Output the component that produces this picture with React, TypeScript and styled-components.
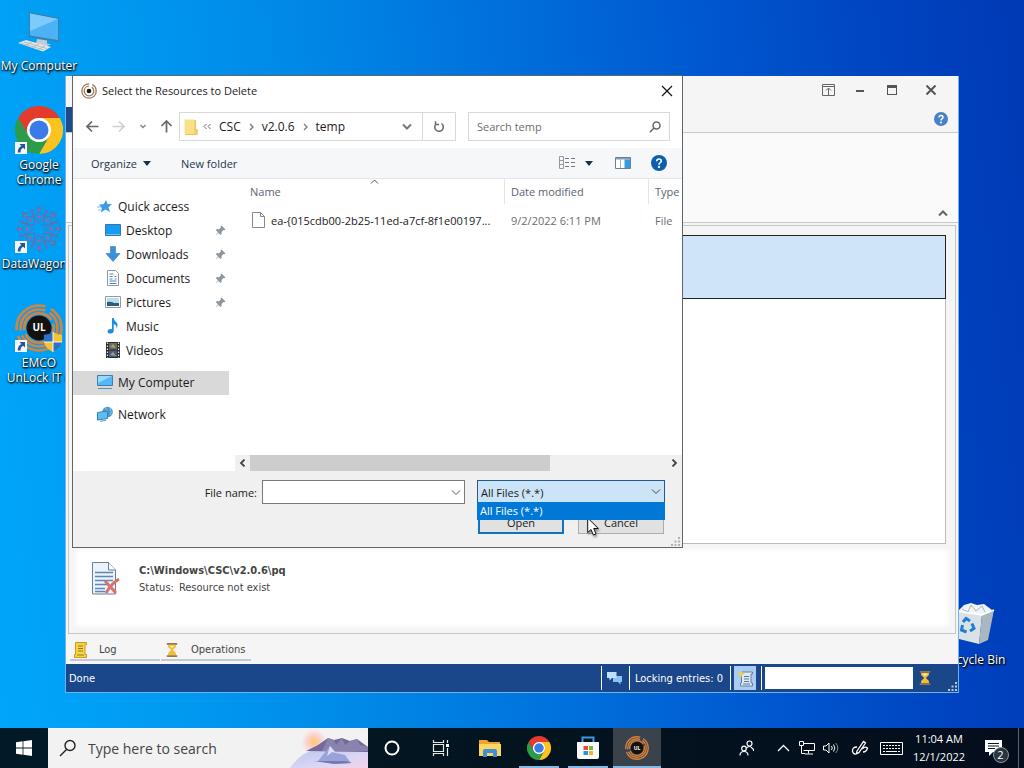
import { useState } from 'react';
import styled, { createGlobalStyle, css } from 'styled-components';

const uiFont = '"Open Sans", "Noto Sans", sans-serif';
const appFont = '"DejaVu Sans Condensed", "DejaVu Sans", sans-serif';

const places = [
  { name: 'Desktop', icon: <DesktopIcon />, pinned: true },
  { name: 'Downloads', icon: <DownloadsIcon />, pinned: true },
  { name: 'Documents', icon: <DocumentsIcon />, pinned: true },
  { name: 'Pictures', icon: <PicturesIcon />, pinned: true },
  { name: 'Music', icon: <MusicIcon />, pinned: false },
  { name: 'Videos', icon: <VideosIcon />, pinned: false },
];

const shortcuts = [
  { name: 'My Computer', icon: <ComputerLargeIcon />, link: false },
  { name: 'Google Chrome', icon: <ChromeIcon size={48} />, link: true },
  { name: 'DataWagon…', icon: <DataWagonIcon />, link: true },
  { name: 'EMCO UnLock\u00a0IT\u00a06', icon: <EmcoIcon />, link: true },
];

function App() {
  return (
    <StScreen>
      <GlobalStyle />
      <StDesktop>
        <StShortcutList>
          {shortcuts.map((item) => (
            <StShortcut key={item.name}>
              <StShortcutIcon>
                {item.icon}
                {item.link && <StLinkBadge><LinkArrowIcon /></StLinkBadge>}
              </StShortcutIcon>
              <StShortcutName>{item.name}</StShortcutName>
            </StShortcut>
          ))}
        </StShortcutList>
        <StRecycleBin>
          <StShortcutIcon><RecycleIcon /></StShortcutIcon>
          <StShortcutName>Recycle Bin</StShortcutName>
        </StRecycleBin>
        <MainWindow />
        <FileDialog />
        <StCursor><CursorIcon /></StCursor>
      </StDesktop>
      <Taskbar />
    </StScreen>
  );
}

export default App;

function MainWindow() {
  return (
    <StWindow>
      <StWindowHead>
        <StWindowButtons>
          <StWindowButton aria-label="Ribbon options">
            <svg width="13" height="12" fill="none" stroke="#666">
              <path d="M.5.5h12v11H.5zM.5 2.5h12M6.5 11V4.500M4 6.500l2.500-2.500 2.500 2.500" />
            </svg>
          </StWindowButton>
          <StWindowButton aria-label="Minimize">
            <svg width="8" height="12"><path d="M0 6h8v2H0z" fill="#555" /></svg>
          </StWindowButton>
          <StWindowButton aria-label="Maximize">
            <svg width="10" height="10"><path d="M0 0h10v10H0zM1 3v6h8V3z" fill="#555" fillRule="evenodd" /></svg>
          </StWindowButton>
          <StWindowButton $wide aria-label="Close">
            <svg width="10" height="10" stroke="#555" strokeWidth="2"><path d="M.5.5l9 9M9.500.5l-9 9" /></svg>
          </StWindowButton>
        </StWindowButtons>
        <StRibbonTabs>
          <StFileTab aria-label="File" />
          <StRibbonHelp aria-label="Help"><HelpIcon size={14} color="#4a80c8" /></StRibbonHelp>
        </StRibbonTabs>
      </StWindowHead>
      <StRibbon>
        <StPlainButton aria-label="Collapse ribbon">
          <svg width="10" height="8" fill="none" stroke="#666" strokeWidth="2"><path d="M1 6.500l4-4 4 4" /></svg>
        </StPlainButton>
      </StRibbon>
      <StWorkspace>
        <StResourceList>
          <StSelectedResource />
        </StResourceList>
        <StDetails>
          <MissingFileIcon />
          <div>
            <StDetailsPath>C:\Windows\CSC\v2.0.6\pq</StDetailsPath>
            <StDetailsStatus><span>Status:</span> <span>Resource not exist</span></StDetailsStatus>
          </div>
        </StDetails>
      </StWorkspace>
      <StPanelTabs>
        <StPanelTab><LogIcon /><span>Log</span></StPanelTab>
        <StPanelTab><HourglassIcon size={14} /><span>Operations</span></StPanelTab>
      </StPanelTabs>
      <StStatusBar>
        <StStatusText>Done</StStatusText>
        <StStatusCell><ChatIcon /></StStatusCell>
        <StStatusCell>Locking entries: 0</StStatusCell>
        <StStatusCell $tight>
          <StStatusToggle aria-label="Show log"><ScrollIcon /></StStatusToggle>
        </StStatusCell>
        <StStatusCell $tight>
          <StProgress />
          <HourglassIcon size={14} />
        </StStatusCell>
        <StAppGrip><GripIcon color="#b9cbe4" /></StAppGrip>
      </StStatusBar>
    </StWindow>
  );
}

function FileDialog() {
  const [fileName, setFileName] = useState('');
  const [search, setSearch] = useState('');

  return (
    <StDialog role="dialog" aria-labelledby="dialog-title">
      <StDialogTitleBar>
        <RingsIcon />
        <StDialogTitle id="dialog-title">Select the Resources to Delete</StDialogTitle>
        <StPlainButton aria-label="Close">
          <svg width="12" height="12" stroke="#111" strokeWidth="1.200"><path d="M1 1l10 10M11 1L1 11" /></svg>
        </StPlainButton>
      </StDialogTitleBar>

      <StNavBar>
        <StNavButtons>
          <StPlainButton aria-label="Back"><ArrowIcon color="#666" /></StPlainButton>
          <StPlainButton aria-label="Forward"><ArrowIcon color="#d0d0d0" rotate={180} /></StPlainButton>
          <StPlainButton aria-label="Recent locations">
            <svg width="8" height="6" fill="none" stroke="#888" strokeWidth="1.500"><path d="M1.500 1l2.500 2.500L6.500 1" /></svg>
          </StPlainButton>
          <StPlainButton aria-label="Up"><ArrowIcon color="#666" rotate={90} /></StPlainButton>
        </StNavButtons>
        <StAddress>
          <FolderIcon />
          <StCrumbs>
            <svg width="8" height="8" fill="none" stroke="#666"><path d="M3.500 1L1 3.500 3.500 6M7.500 1L5 3.500 7.500 6" /></svg>
            <StCrumb>CSC</StCrumb>
            <CrumbArrow />
            <StCrumb>v2.0.6</StCrumb>
            <CrumbArrow />
            <StCrumb>temp</StCrumb>
          </StCrumbs>
          <StPlainButton aria-label="Previous locations"><ChevronDown color="#777" width={2} /></StPlainButton>
          <StRefresh aria-label="Refresh">
            <svg width="12" height="13" fill="none" stroke="#666" strokeWidth="1.500">
              <path d="M8.500 3.500a4.300 4.300 0 1 1-5.500.5M2.500 1.200v3.300h3.500" />
            </svg>
          </StRefresh>
        </StAddress>
        <StSearch>
          <input
            aria-label="Search temp"
            placeholder="Search temp"
            value={search}
            onChange={(e) => setSearch(e.target.value)}
          />
          <svg width="12" height="12" fill="none" stroke="#666" strokeWidth="1.500">
            <circle cx="7.500" cy="4.500" r="3.500" /><path d="M5 7L.8 11.200" />
          </svg>
        </StSearch>
      </StNavBar>

      <StToolbar>
        <StToolButton>Organize <Triangle /></StToolButton>
        <StToolButton>New folder</StToolButton>
        <StToolbarRight>
          <StToolButton aria-label="Change view">
            <svg width="17" height="14" fill="none" stroke="#778">
              <path d="M.5.5h4v12h-4zM.5 4.500h4M.5 8.500h4" stroke="#999" />
              <path d="M6 2.500h4M12 2.500h4M6 6.500h4M12 6.500h4M6 10.500h4M12 10.500h4" />
            </svg>
            <StViewArrow><Triangle /></StViewArrow>
          </StToolButton>
          <StPlainButton aria-label="Preview pane">
            <svg width="16" height="12"><path d="M.5.5h15v11H.5z" fill="#fff" stroke="#6b7f90" /><path d="M1 1h14v1.500H1z" fill="#8aa0b2" /><path d="M9.500 2.500H15V11H9.500z" fill="#3a9ae0" /><path d="M5.500 2v9" stroke="#9fb6c8" /></svg>
          </StPlainButton>
          <StPlainButton aria-label="Help"><HelpIcon size={16} color="#0d5fae" /></StPlainButton>
        </StToolbarRight>
      </StToolbar>

      <StDialogBody>
        <StSidebar>
          <StPlace href="#quick"><StarIcon />Quick access</StPlace>
          {places.map((place) => (
            <StPlace key={place.name} href={`#${place.name}`} $nested>
              {place.icon}
              {place.name}
              {place.pinned && <StPin><PinIcon /></StPin>}
            </StPlace>
          ))}
          <StPlace href="#computer" $selected $spaced><ComputerIcon />My Computer</StPlace>
          <StPlace href="#network" $spaced><NetworkIcon />Network</StPlace>
        </StSidebar>
        <StFiles>
          <StFileTable>
            <colgroup>
              <StCol $w={269} />
              <StCol $w={144} />
              <col />
            </colgroup>
            <thead>
              <tr>
                <th>
                  Name
                  <StSortMark>
                    <svg width="9" height="5" fill="none" stroke="#555"><path d="M1 4.500l3.500-3.500L8 4.500" /></svg>
                  </StSortMark>
                </th>
                <th>Date modified</th>
                <th>Type</th>
              </tr>
            </thead>
            <tbody>
              <tr>
                <td>
                  <StFileName>
                    <svg width="13" height="16" fill="#fff" stroke="#888"><path d="M.5.5h8l4 4v11H.5zM8.500.5v4h4" /></svg>
                    <span>ea-{'{'}015cdb00-2b25-11ed-a7cf-8f1e00197...</span>
                  </StFileName>
                </td>
                <td>9/2/2022 6:11 PM</td>
                <td>File</td>
              </tr>
            </tbody>
          </StFileTable>
          <StScrollBar>
            <StPlainButton aria-label="Scroll left"><ScrollArrow /></StPlainButton>
            <StScrollTrack><StScrollThumb /></StScrollTrack>
            <StPlainButton aria-label="Scroll right"><ScrollArrow flip /></StPlainButton>
          </StScrollBar>
        </StFiles>
      </StDialogBody>

      <StDialogFooter>
        <StFileNameLabel htmlFor="file-name">File name:</StFileNameLabel>
        <StFileNameBox>
          <input id="file-name" value={fileName} onChange={(e) => setFileName(e.target.value)} />
          <StPlainButton aria-label="File name history"><ChevronDown color="#555" width={1} /></StPlainButton>
        </StFileNameBox>
        <StFilter>
          <StFilterSelect aria-label="File type">
            <option>All Files (*.*)</option>
          </StFilterSelect>
          <StFilterArrow><ChevronDown color="#444" width={1} /></StFilterArrow>
          <StFilterMenu role="listbox">
            <li role="option" aria-selected="true">All Files (*.*)</li>
          </StFilterMenu>
        </StFilter>
        <StDialogButtons>
          <StDialogButton $primary>Open</StDialogButton>
          <StDialogButton>Cancel</StDialogButton>
        </StDialogButtons>
        <StDialogGrip><GripIcon color="#b0b0b0" /></StDialogGrip>
      </StDialogFooter>
    </StDialog>
  );
}

function Taskbar() {
  return (
    <StTaskbar>
      <StTask aria-label="Start">
        <svg width="16" height="16" fill="#fff"><path d="M0 2.200L6.600 1.300V7.600H0zM7.400 1.200L16 0V7.600H7.400zM0 8.400H6.600V14.700L0 13.800zM7.400 8.400H16V16L7.400 14.800z" /></svg>
      </StTask>
      <StTaskSearch>
        <svg width="18" height="18" fill="none" stroke="#222" strokeWidth="1.400"><circle cx="11" cy="6.500" r="5" /><path d="M7.500 10.500L1 17" /></svg>
        <input aria-label="Type here to search" placeholder="Type here to search" />
        <SearchArt />
      </StTaskSearch>
      <StTaskList>
        <StTask aria-label="Cortana">
          <svg width="16" height="16" fill="none" stroke="#fff" strokeWidth="2"><circle cx="8" cy="8" r="6.500" /></svg>
        </StTask>
        <StTask aria-label="Task view">
          <svg width="18" height="16" fill="none" stroke="#e8e8e8" strokeWidth="1.200">
            <path d="M1.500 4.500h10v7h-10zM1.500 0v2.500h10V0M1.500 16v-2.500h10V16M15.500 0v3M15.500 8v8" />
            <path d="M14 4h3v3h-3z" fill="#fff" stroke="none" />
          </svg>
        </StTask>
        <StTask aria-label="File Explorer">
          <svg width="22" height="18"><path d="M0 1h8l2 2h11v14H0z" fill="#e8a72c" /><path d="M0 5h22v12H0z" fill="#fcd462" /><path d="M4 18v-6q0-2 2-2h10q2 0 2 2v6h-4v-4H8v4z" fill="#3d8fd6" /></svg>
        </StTask>
        <StTask $open aria-label="Google Chrome"><ChromeIcon size={24} /></StTask>
        <StTask $open aria-label="Microsoft Store">
          <svg width="24" height="24">
            <path d="M6.500 7V1.500h11V7" fill="none" stroke="#3c9be0" strokeWidth="2" />
            <path d="M1 6h22v15q0 2-2 2H3q-2 0-2-2z" fill="#f7f9fb" />
            <path d="M7.500 10H12v4H7.500z" fill="#e8502e" /><path d="M13 10h4v4h-4z" fill="#7fb93c" />
            <path d="M7.500 15H12v4H7.500z" fill="#2a94dc" /><path d="M13 15h4v4h-4z" fill="#f4b52c" />
          </svg>
        </StTask>
        <StTask $open $active aria-label="EMCO UnLock IT"><UnlockLogo size={24} /></StTask>
      </StTaskList>
      <StTray>
        <StTrayButton $w={48} aria-label="People">
          <svg width="16" height="16" fill="none" stroke="#fff" strokeWidth="1.200"><circle cx="10.500" cy="3.500" r="2.500" /><path d="M7.500 8q3-3 5.500 0 2 1 1.500 3" /><circle cx="5" cy="8.500" r="2.300" /><path d="M1 15.500q0-4 4-4t4 4" /></svg>
        </StTrayButton>
        <StTrayButton $w={24} aria-label="Show hidden icons">
          <svg width="13" height="8" fill="none" stroke="#fff" strokeWidth="1.300"><path d="M1 7l5.500-5.500L12 7" /></svg>
        </StTrayButton>
        <StTrayButton $w={24} aria-label="Network">
          <svg width="16" height="14" fill="none" stroke="#fff"><path d="M4.500 2.500h11v7h-11M9.500 9.500v3M6 13h8M.5.5h4v4h-4zM2.500 5v7.500H6" /></svg>
        </StTrayButton>
        <StTrayButton $w={24} aria-label="Volume">
          <svg width="16" height="14" fill="none" stroke="#fff"><path d="M.5 5h2.500l3-3v10l-3-3H.5zM8.500 5q1.500 2 0 4M10.500 3.500q2.700 3.500 0 7" /><path d="M12.800 2q4 5 0 10" stroke="#888" /></svg>
        </StTrayButton>
        <StTrayButton $w={34} aria-label="Windows Ink">
          <svg width="18" height="16" fill="none" stroke="#fff" strokeWidth="1.300"><path d="M6 11L12.500 1.500l2 1.500L8 12.500l-2.500 1zM6 7q-5 0-4.500 4.500Q3 16 8 12.500M11 9q3-3 5.500-1-1 4-4.500 4" /></svg>
        </StTrayButton>
        <StTrayButton $w={28} aria-label="Touch keyboard">
          <svg width="23" height="13" fill="none" stroke="#fff"><path d="M.5.5h22v12H.5z" /><path d="M3 3.500h17M3 6.500h17" strokeDasharray="2 1" /><path d="M3 9.500h2M6 9.500h11M18 9.500h2" /></svg>
        </StTrayButton>
        <StClock><span>11:04 AM</span><span>12/1/2022</span></StClock>
        <StTrayButton $w={40} aria-label="2 new notifications">
          <StNotice>
            <svg width="17" height="16"><path d="M0 0h17v12H8l-4 4v-4H0z" fill="#fff" /><path d="M3 3.500h11M3 6h11M3 8.500h7" stroke="#0b1622" /></svg>
            <StNoticeCount>2</StNoticeCount>
          </StNotice>
        </StTrayButton>
        <StShowDesktop aria-label="Show desktop" />
      </StTray>
    </StTaskbar>
  );
}

/* icons */

function ArrowIcon({ color, rotate = 0 }: { color: string; rotate?: number }) {
  return (
    <svg width="13" height="13" viewBox="0 0 13 13" fill="none" stroke={color} strokeWidth="1.700">
      <path d="M12.500 6.500H1.500M6 1.500l-5 5 5 5" transform={`rotate(${rotate} 6.500 6.500)`} />
    </svg>
  );
}

function ChevronDown({ color, width }: { color: string; width: number }) {
  return (
    <svg width="10" height="7" fill="none" stroke={color} strokeWidth={width}><path d="M1 1.500l4 4 4-4" /></svg>
  );
}

function CrumbArrow() {
  return <svg width="5" height="8" fill="none" stroke="#777" strokeWidth="1.300"><path d="M1 1l3 3-3 3" /></svg>;
}

function ScrollArrow({ flip }: { flip?: boolean }) {
  return (
    <svg width="7" height="8" fill="none" stroke="#444" strokeWidth="1.800">
      <path d={flip ? 'M1.500.5L5 4 1.500 7.500' : 'M5.500.5L2 4l3.500 3.500'} />
    </svg>
  );
}

function Triangle() {
  return <svg width="8" height="5"><path d="M0 0h8L4 5z" fill="#1f2f48" /></svg>;
}

function GripIcon({ color }: { color: string }) {
  return (
    <svg width="9" height="9" fill={color}>
      <path d="M7 0h2v2H7zM7 3.500h2v2H7zM7 7h2v2H7zM3.500 3.500h2v2h-2zM3.500 7h2v2h-2zM0 7h2v2H0z" />
    </svg>
  );
}

function HelpIcon({ size, color }: { size: number; color: string }) {
  return (
    <svg width={size} height={size} viewBox="0 0 16 16">
      <circle cx="8" cy="8" r="8" fill={color} />
      <path d="M5.700 6.200Q5.800 4 8 4q2.300 0 2.300 2 0 1-1.200 1.800Q8 8.500 8 9.700" fill="none" stroke="#fff" strokeWidth="1.600" />
      <circle cx="8" cy="11.900" r="1.100" fill="#fff" />
    </svg>
  );
}

function RingsIcon() {
  return (
    <svg width="16" height="16" fill="none" stroke="#a07a5c" strokeWidth="1.300">
      <circle cx="8" cy="8" r="7.200" strokeDasharray="34 3" />
      <circle cx="8" cy="8" r="4.800" strokeDasharray="22 3" />
      <circle cx="8" cy="8" r="2.300" fill="#1c1410" stroke="none" />
    </svg>
  );
}

function FolderIcon() {
  return (
    <svg width="14" height="16"><path d="M1 1h11v9h1.500v6H1z" fill="#e9c65a" /><path d="M.5.5h10v14.500H.5z" fill="#fbe08a" /><path d="M11 11h2.500v4.500H11z" fill="#f0cd62" /></svg>
  );
}

function StarIcon() {
  return (
    <svg width="16" height="16"><path d="M9 2l1.500 4 4.500.2-3.500 3 1.500 4.800-4.500-2.500L4 14.500l.8-4.500L2 6.800l4.800-.8z" fill="#3a9ce6" /><path d="M0 9h4M1 12h3" stroke="#7fc0f0" /></svg>
  );
}

function DesktopIcon() {
  return <svg width="16" height="12"><path d="M.5.5h15v11H.5z" fill="#169cf2" stroke="#3578a8" /><path d="M1 10.500h14" stroke="#66c4ff" /></svg>;
}

function DownloadsIcon() {
  return <svg width="16" height="16"><path d="M5.500.5h5v7H15l-7 8-7-8h4.500z" fill="#3c8fdc" stroke="#2f7cc4" strokeWidth=".6" /></svg>;
}

function DocumentsIcon() {
  return (
    <svg width="16" height="16"><path d="M2.500.5h8l3 3v12h-11z" fill="#fff" stroke="#8b9aa8" /><path d="M4.500 4h4M4.500 6.500h3M9.500 6.500h2M4.500 9h3M9.500 9h2M4.500 11h7M4.500 13.500h7" stroke="#4b88b8" /></svg>
  );
}

function PicturesIcon() {
  return (
    <svg width="16" height="12"><path d="M.5.5h15v11H.5z" fill="#fff" stroke="#8f9aa5" /><path d="M2 2h12v8H2z" fill="#b9dcf4" /><path d="M2 6q4-1 7 1l5 0v3H2z" fill="#2d5e73" /></svg>
  );
}

function MusicIcon() {
  return (
    <svg width="16" height="16"><path d="M7 0h1.700q.3 2.500 2.500 4.200 2.500 2.300.3 6.300.6-3.300-2.800-4.500V12.500Q8.700 15.500 5.500 15.500 2.500 15.500 2.500 13.200 2.800 10.800 7 11z" fill="#1a8de0" /></svg>
  );
}

function VideosIcon() {
  return (
    <svg width="16" height="16">
      <path d="M1 0h14v16H1z" fill="#2b2b33" />
      <path d="M4 1h8v6.500H4z" fill="#6c6b52" /><path d="M4 8.500h8V15H4z" fill="#48588c" />
      <path d="M5 5l3-3 3 4zM5 13l3-3 3 4z" fill="#a3a468" />
      <path d="M2.500.5V16M13.500.5V16" stroke="#e6e6e6" strokeWidth="1.200" strokeDasharray="1.500 1.500" />
    </svg>
  );
}

function ComputerIcon() {
  return (
    <svg width="16" height="16"><path d="M.5 1.500h15v10H.5z" fill="#54b8f4" stroke="#3d7fae" /><path d="M1 2l14 0L1 9z" fill="#9bd8fa" /><path d="M1 14.500h14" stroke="#5f8fb0" /></svg>
  );
}

function NetworkIcon() {
  return (
    <svg width="16" height="16">
      <circle cx="10.500" cy="6" r="5.300" fill="#4b97cf" />
      <path d="M8 2q3 1 2.500 5M13 2q2 3 .5 7" fill="none" stroke="#8cc4e8" />
      <path d="M.5 6.500L10.500 5v7.500L.5 14z" fill="#5cbcf5" stroke="#3d7fae" />
      <path d="M3 15.300l6-1" stroke="#5f8fb0" />
    </svg>
  );
}

function PinIcon() {
  return (
    <svg width="11" height="11" fill="#8d959c"><path d="M6.500.5l4 4-1.200.8-.8-.3-2 2 .2 2-1.100 1L3.500 7.900.5 10.500 3 7.300.8 5.200l1-1.100 2.100.3 2-2-.3-.9z" /></svg>
  );
}

function ChromeIcon({ size }: { size: number }) {
  return (
    <svg width={size} height={size} viewBox="0 0 48 48">
      <circle cx="24" cy="24" r="13" fill="#fff" />
      <path d="M3.200 12A24 24 0 0 1 44.800 12H24A12 12 0 0 0 13.600 30z" fill="#e33b2e" />
      <path d="M44.800 12A24 24 0 0 1 24 48L34.400 30A12 12 0 0 0 24 12z" fill="#fcc31e" />
      <path d="M24 48A24 24 0 0 1 3.200 12L13.600 30A12 12 0 0 0 34.400 30z" fill="#2c9c4b" />
      <circle cx="24" cy="24" r="9.500" fill="#3a7be8" />
    </svg>
  );
}

function DataWagonIcon() {
  const angles = [0, 45, 90, 135, 180, 225, 270, 315];
  return (
    <svg width="48" height="48" viewBox="0 0 48 48" fill="none" stroke="#7068a8" strokeWidth="1">
      {angles.map((a) => (
        <g key={a} transform={`rotate(${a} 24 24)`}>
          <path d="M24 18l-5-6 5-6 5 6zM19 12l-4-7M29 12l4-7M24 6V2M20 5l4-3.500 4 3.500" />
          <circle cx="24" cy="12" r="1.500" fill="#b0608c" stroke="none" />
          <circle cx="24" cy="5" r="1.200" fill="#b0608c" stroke="none" />
        </g>
      ))}
    </svg>
  );
}

function UnlockLogo({ size }: { size: number }) {
  return (
    <svg width={size} height={size} viewBox="0 0 48 48" fill="none" stroke="#d9823c" strokeWidth="2.600">
      <circle cx="24" cy="24" r="22.500" strokeDasharray="62 6 44 6" />
      <circle cx="24" cy="24" r="18.500" strokeDasharray="50 5 38 5" />
      <circle cx="24" cy="24" r="14.800" strokeDasharray="40 4" />
      <circle cx="24" cy="24" r="12.500" fill="#14110f" stroke="none" />
      <text x="24" y="27" textAnchor="middle" fontFamily="Open Sans, sans-serif" fontWeight="700" fontSize="10" fill="#fff" stroke="none">UL</text>
    </svg>
  );
}

function EmcoIcon() {
  return (
    <StStack>
      <UnlockLogo size={48} />
      <StShield>
        <svg width="20" height="20" viewBox="0 0 20 22">
          <path d="M10 0Q14 3 20 3V11Q19 18 10 22z" fill="#f6c431" />
          <path d="M10 0Q6 3 0 3V11Q1 18 10 22z" fill="#2d72c8" />
          <path d="M0 11h10v11Q1 18 0 11z" fill="#f6c431" />
          <path d="M10 11h10Q19 18 10 22z" fill="#2d72c8" />
          <path d="M10 0v22M0 11h20" stroke="#fff" strokeWidth="1" />
        </svg>
      </StShield>
    </StStack>
  );
}

function LinkArrowIcon() {
  return (
    <svg width="12" height="12"><path d="M0 0h12v12H0z" fill="#f4f6f8" /><path d="M4.500 2H10v5.500L8.200 5.800Q5.500 7 5.500 10.500H2.800Q2.500 6 6.300 3.900z" fill="#23549c" /></svg>
  );
}

function ComputerLargeIcon() {
  return (
    <svg width="48" height="48">
      <path d="M14 5l30 6v24l-30-5z" fill="#3f7ea8" />
      <path d="M15 6.500l28 5.500v21l-28-4.500z" fill="#4db2f5" />
      <path d="M15 6.500l28 5.500L15 24z" fill="#7ccbfb" />
      <path d="M22 32l10 1.500v3l4 1-6 2-9-3z" fill="#c3ccd3" />
      <path d="M3 36l8-3 25 7-8 4.500z" fill="#e3e6e8" />
      <path d="M6 36.200l23 6.800M9 35l23 6.500M10 38.500l7-3.500M17 40.500l7-3.500M23 42.500l7-3.500" stroke="#a6adb2" strokeWidth=".7" />
    </svg>
  );
}

function RecycleIcon() {
  return (
    <svg width="48" height="48">
      <path d="M8 10l6-6 7-2 6 2 7-1 8 6-6 5H12z" fill="#f1f4f6" />
      <path d="M12 8l6 3 3-7 5 6 6-5 3 6" stroke="#a9b4bd" fill="none" />
      <path d="M6 10l26 4-3 29-20-5z" fill="#dbe2e7" />
      <path d="M32 14l12-5-6 30-9 4z" fill="#aab6c0" />
      <path d="M6 10l26 4 12-5" fill="none" stroke="#fff" strokeWidth="1.500" />
      <g fill="none" stroke="#1c7fd4" strokeWidth="3">
        <path d="M13 21l3-3.500 4 2.500M22 22.500l2 5-4 2.500M16.500 31l-5-2 1-5" />
      </g>
    </svg>
  );
}

function MissingFileIcon() {
  return (
    <svg width="28" height="34">
      <path d="M.5.5h16l7 7.500v24H.5z" fill="#e9f3fb" stroke="#6c7f92" />
      <path d="M16.500.5v7.500h7" fill="#fff" stroke="#6c7f92" />
      <path d="M3 10.500h18M3 14.500h18M3 18.500h18M3 22.500h12M3 26.500h10M3 29.500h10" stroke="#5f87b5" strokeWidth="1.500" />
      <path d="M13 19l11 12M27 17q-8 5-13 14" fill="none" stroke="#d9716c" strokeWidth="3" />
    </svg>
  );
}

function LogIcon() {
  return (
    <svg width="13" height="16"><path d="M1.500.5h11v2H11v10h1.500v3H.5v-3h1z" fill="#f7d44a" stroke="#c99a1c" /><path d="M4 4h5M4 6.500h5M4 9h5M3 13h7" stroke="#9c7a18" /></svg>
  );
}

function HourglassIcon({ size }: { size: number }) {
  return (
    <svg width={size} height={size} viewBox="0 0 16 16">
      <path d="M3.500 2h9v2.500L9 8l3.500 3.500V14h-9v-2.500L7 8 3.500 4.500z" fill="#f3bd35" />
      <path d="M5 3h6L8 5.500z" fill="#fff2c2" />
      <path d="M2 0h12v2H2zM2 14h12v2H2z" fill="#8f7a4c" />
    </svg>
  );
}

function ChatIcon() {
  return (
    <svg width="15" height="13"><path d="M6 4h9v6h-1.500v2.500L11 10H6z" fill="#8fc1ee" /><path d="M0 0h9.500v6H5L2.500 8.500V6H0z" fill="#bfe0fa" /></svg>
  );
}

function ScrollIcon() {
  return (
    <svg width="16" height="17"><path d="M4.500 2h11v2H14v9h1.500v3H3.500v-3h1z" fill="#dceaf5" stroke="#64809c" /><path d="M7 6.500h5M7 9h5M7 11.500h5M6 14h7" stroke="#5a7896" /><path d="M4 0l1 2.500L8 4 5 5 4 8 3 5 0 4l3-1.500z" fill="#e8d44c" /></svg>
  );
}

function CursorIcon() {
  return (
    <svg width="13" height="20"><path d="M.7 1v14.500l3.300-3 2.400 5.500 2.600-1.100L6.700 11.500h4.600z" fill="#fff" stroke="#111" /></svg>
  );
}

function SearchArt() {
  return (
    <svg width="78" height="40" viewBox="0 0 78 40">
      <defs>
        <radialGradient id="sun"><stop offset="0" stopColor="#ffc66b" /><stop offset=".5" stopColor="#fcd0c8" /><stop offset="1" stopColor="#f2f2f2" /></radialGradient>
        <linearGradient id="lake" x1="0" y1="0" x2="1" y2="1"><stop offset="0" stopColor="#b7c6f0" /><stop offset=".6" stopColor="#dcd6f3" /><stop offset="1" stopColor="#f4d3ea" /></linearGradient>
      </defs>
      <circle cx="24" cy="14" r="13" fill="url(#sun)" />
      <path d="M0 40Q12 23 26 22h52v18z" fill="url(#lake)" />
      <path d="M16 23l12-6 10-7 6 2 8-2 8 3 7-2 11 8v5z" fill="#716a9a" />
      <path d="M38 10l6 2 2 5 6-7 3 7 5-4 7-2 3 6 8 2v4H32z" fill="#8a83ad" />
      <path d="M28 33l12-15 6 7 9 2 6 8-16 1z" fill="#98a3da" />
      <path d="M40 18l-3 10 5-4 4 1z" fill="#dce0fa" />
      <path d="M24 33h32l6 2-18 1z" fill="#7479b4" />
    </svg>
  );
}

/* styles */

const GlobalStyle = createGlobalStyle`
  * {
    box-sizing: border-box;
  }
  body {
    margin: 0;
    font-family: ${uiFont};
    font-size: 12px;
    color: #1a1a1a;
  }
  button, input, select {
    font: inherit;
    color: inherit;
  }
  svg {
    display: block;
    flex-shrink: 0;
  }
`

const StScreen = styled.div`
  display: flex;
  flex-direction: column;
  height: 100vh;
  overflow: hidden;
`

const StDesktop = styled.main`
  position: relative;
  flex: 1;
  background: linear-gradient(84deg, #00a6fa 0%, #009cf2 14%, #0088e6 34%, #0070dc 52%, #0058d0 70%, #0042c0 88%, #003ab4 100%);
`

const StShortcutList = styled.ul`
  display: grid;
  grid-auto-rows: 99px;
  justify-content: start;
  margin: 0;
  padding: 7px 0 0;
  list-style: none;
`

const shortcut = css`
  display: flex;
  flex-direction: column;
  align-items: center;
  gap: 3px;
  width: 78px;
`

const StShortcut = styled.li`
  ${shortcut}
`

const StRecycleBin = styled.div`
  ${shortcut}
  position: absolute;
  right: 11px;
  bottom: 61px;
`

const StShortcutIcon = styled.div`
  position: relative;
`

const StShortcutName = styled.span`
  color: #fff;
  font-size: 12px;
  line-height: 15px;
  text-align: center;
  text-shadow: 0 1px 2px #000, 1px 1px 2px #000;
`

const StLinkBadge = styled.span`
  position: absolute;
  left: 0;
  bottom: 0;
`

const StStack = styled.div`
  position: relative;
`

const StShield = styled.span`
  position: absolute;
  right: 0;
  bottom: 0;
`

const StCursor = styled.div`
  position: absolute;
  left: 587px;
  top: 517px;
  filter: drop-shadow(1px 2px 1px rgba(0, 0, 0, 0.4));
`

const StPlainButton = styled.button`
  display: flex;
  align-items: center;
  justify-content: center;
  padding: 0;
  border: 0;
  background: none;
`

/* main window */

const StWindow = styled.section`
  position: absolute;
  inset: 76px 65px 35px 65px;
  display: flex;
  flex-direction: column;
  border: 1px solid #6fb2ee;
  border-top: 0;
  background: #f5f5f5;
  font-family: ${appFont};
  font-size: 11px;
  color: #444;
`

const StWindowHead = styled.header`
  border-bottom: 1px solid #c6ccc2;
`

const StWindowButtons = styled.div`
  display: flex;
  justify-content: flex-end;
  height: 28px;
  padding-right: 4px;
`

const StWindowButton = styled(StPlainButton)<{ $wide?: boolean }>`
  width: ${({ $wide }) => ($wide ? '46px' : '32px')};
`

const StRibbonTabs = styled.div`
  display: flex;
  justify-content: space-between;
  align-items: flex-end;
  height: 28px;
`

const StFileTab = styled.button`
  width: 52px;
  height: 25px;
  border: 0;
  background: #1e4a8c;
`

const StRibbonHelp = styled(StPlainButton)`
  padding: 0 10px 6px 0;
`

const StRibbon = styled.div`
  display: flex;
  justify-content: flex-end;
  align-items: flex-end;
  height: 90px;
  padding: 0 10px 5px 0;
  border-bottom: 1px solid #c6ccc2;
  background: #fafafa;
`

const StWorkspace = styled.div`
  display: flex;
  flex-direction: column;
  flex: 1;
  gap: 8px;
  margin: 2px 2px 0;
  padding: 9px;
  border: 1px solid #c4c8c0;
  background: #f5f5f5;
`

const StResourceList = styled.div`
  flex: 1;
  border: 1px solid #bbb;
  border-top: 0;
  background: #fff;
`

const StSelectedResource = styled.div`
  height: 64px;
  margin: 0 -1px;
  border: 1px solid #222;
  background: #cfe4f8;
`

const StDetails = styled.div`
  display: flex;
  gap: 19px;
  height: 72px;
  padding: 10px 14px;
  background: #fff;
  box-shadow: 0 0 4px 2px #fff;
`

const StDetailsPath = styled.div`
  font-weight: 700;
  line-height: 17px;
`

const StDetailsStatus = styled.div`
  display: flex;
  gap: 5px;
  line-height: 17px;
`

const StPanelTabs = styled.div`
  display: flex;
  gap: 1px;
  height: 30px;
  padding: 6px 4px 3px;
`

const StPanelTab = styled.button`
  display: flex;
  align-items: center;
  gap: 12px;
  min-width: 90px;
  padding: 0 6px 0 4px;
  border: 0;
  border-bottom: 2px solid #c3c8d4;
  background: none;
`

const StStatusBar = styled.footer`
  display: flex;
  align-items: center;
  height: 28px;
  background: #1a468a;
  color: #fff;
`

const StStatusText = styled.span`
  flex: 1;
  padding-left: 3px;
`

const StStatusCell = styled.div<{ $tight?: boolean }>`
  display: flex;
  align-items: center;
  height: 24px;
  padding: ${({ $tight }) => ($tight ? '0 4px 0 3px' : '0 7px 0 5px')};
  border-left: 1px solid #fff;
  white-space: nowrap;
  & + & {
    min-width: 31px;
  }
`

const StStatusToggle = styled.button`
  display: flex;
  align-items: center;
  justify-content: center;
  width: 22px;
  height: 24px;
  padding: 0;
  border: 0;
  background: #a9cdf2;
`

const StProgress = styled.div`
  width: 148px;
  height: 22px;
  margin-right: 5px;
  background: #fff;
`

const StAppGrip = styled.span`
  align-self: flex-end;
  margin-left: 12px;
  padding: 0 1px 1px 0;
`

/* file dialog */

const StDialog = styled.section`
  position: absolute;
  inset: 75px 341px 180px 72px;
  display: flex;
  flex-direction: column;
  border: 1px solid #5d6670;
  background: #fff;
`

const StDialogTitleBar = styled.header`
  display: flex;
  align-items: center;
  gap: 5px;
  height: 29px;
  padding: 0 9px 0 8px;
`

const StDialogTitle = styled.h1`
  flex: 1;
  margin: 0;
  font-size: 11px;
  font-weight: 400;
`

const StNavBar = styled.nav`
  display: flex;
  align-items: center;
  height: 43px;
  padding: 0 12px 0 13px;
`

const StNavButtons = styled.div`
  display: flex;
  align-items: center;
  justify-content: space-between;
  width: 87px;
  margin-right: 6px;
`

const StAddress = styled.div`
  display: flex;
  align-items: center;
  flex: 1;
  height: 29px;
  padding-left: 4px;
  border: 1px solid #d9d9d9;
`

const StCrumbs = styled.div`
  display: flex;
  align-items: center;
  flex: 1;
  gap: 8px;
  padding-left: 5px;
`

const StCrumb = styled.span`
  line-height: 16px;
`

const StRefresh = styled(StPlainButton)`
  width: 33px;
  height: 27px;
  margin-left: 10px;
  border-left: 1px solid #d9d9d9;
`

const StSearch = styled.label`
  display: flex;
  align-items: center;
  width: 202px;
  height: 29px;
  margin-left: 12px;
  padding: 0 8px;
  border: 1px solid #d9d9d9;
  font-size: 11px;
  input {
    flex: 1;
    min-width: 0;
    padding: 0;
    border: 0;
    outline: 0;
    background: none;
  }
  input::placeholder {
    color: #6d6d6d;
  }
`

const StToolbar = styled.div`
  display: flex;
  align-items: center;
  gap: 30px;
  height: 31px;
  padding: 0 15px 0 18px;
  border-bottom: 1px solid #e4e8ec;
  background: #f5f7f9;
  font-size: 11px;
`

const StToolButton = styled.button`
  display: flex;
  align-items: center;
  gap: 6px;
  padding: 0;
  border: 0;
  background: none;
  color: #26354f;
`

const StToolbarRight = styled.div`
  display: flex;
  align-items: center;
  gap: 20px;
  margin-left: auto;
`

const StViewArrow = styled.span`
  margin: 0 2px 0 3px;
`

const StDialogBody = styled.div`
  display: flex;
  flex: 1;
  min-height: 0;
`

const StSidebar = styled.div`
  width: 162px;
  padding: 16px 6px 0 0;
`

const StPlace = styled.a<{ $nested?: boolean; $selected?: boolean; $spaced?: boolean }>`
  display: flex;
  align-items: center;
  gap: 5px;
  height: 24px;
  margin-top: ${({ $spaced }) => ($spaced ? '8px' : '0')};
  padding: 0 3px 2px ${({ $nested }) => ($nested ? '32px' : '24px')};
  background: ${({ $selected }) => ($selected ? '#d9d9d9' : 'none')};
  color: inherit;
  text-decoration: none;
`

const StPin = styled.span`
  margin-left: auto;
`

const StFiles = styled.div`
  display: flex;
  flex-direction: column;
  justify-content: space-between;
  flex: 1;
  min-width: 0;
`

const StFileTable = styled.table`
  width: 100%;
  table-layout: fixed;
  border-spacing: 0;
  color: #6d6d6d;
  font-size: 11px;
  th, td {
    padding: 0 0 0 6px;
    font-weight: 400;
    text-align: left;
    white-space: nowrap;
  }
  th {
    position: relative;
    height: 25px;
    border-left: 1px solid #e5e5e5;
    color: #5c6470;
  }
  th:first-child {
    padding-left: 14px;
    border-left: 1px solid transparent;
  }
  td {
    height: 32px;
    padding-left: 7px;
  }
  td:first-child {
    padding: 0 8px 0 17px;
  }
`

const StCol = styled.col<{ $w: number }>`
  width: ${({ $w }) => $w}px;
`

const StSortMark = styled.span`
  position: absolute;
  top: 0;
  left: 50%;
`

const StFileName = styled.div`
  display: flex;
  align-items: center;
  gap: 6px;
  color: #1a1a1a;
`

const StScrollBar = styled.div`
  display: flex;
  height: 16px;
  background: #f0f0f0;
  button {
    width: 15px;
  }
`

const StScrollTrack = styled.div`
  flex: 1;
`

const StScrollThumb = styled.div`
  width: 72%;
  height: 100%;
  background: #cdcdcd;
`

const StDialogFooter = styled.footer`
  position: relative;
  display: grid;
  grid-template-columns: 1fr 203px 188px;
  column-gap: 12px;
  row-gap: 6px;
  align-items: center;
  height: 76px;
  padding: 9px 17px 13px 0;
  background: #f0f0f0;
  font-size: 11px;
`

const StFileNameLabel = styled.label`
  margin-right: -7px;
  text-align: right;
`

const StFileNameBox = styled.div`
  display: flex;
  height: 24px;
  padding-right: 3px;
  border: 1px solid #7a7a7a;
  background: #fff;
  input {
    flex: 1;
    min-width: 0;
    padding: 0 4px;
    border: 0;
    outline: 0;
    background: none;
  }
`

const StFilter = styled.div`
  position: relative;
  z-index: 1;
`

const StFilterSelect = styled.select`
  display: block;
  width: 100%;
  height: 24px;
  padding: 0 3px;
  border: 1px solid #24598f;
  border-radius: 0;
  appearance: none;
  background: #cce4f7;
`

const StFilterArrow = styled.span`
  position: absolute;
  top: 8px;
  right: 4px;
  pointer-events: none;
`

const StFilterMenu = styled.ul`
  position: absolute;
  top: 22px;
  left: 0;
  right: 0;
  margin: 0;
  padding: 0 3px;
  background: #0078d7;
  color: #fff;
  line-height: 18px;
  list-style: none;
`

const StDialogButtons = styled.div`
  display: flex;
  grid-column: 3;
  justify-content: space-between;
  padding: 0 1px;
`

const StDialogButton = styled.button<{ $primary?: boolean }>`
  width: 86px;
  height: 24px;
  padding: 0;
  border: ${({ $primary }) => ($primary ? '2px solid #0f73c4' : '1px solid #adadad')};
  background: #e1e1e1;
`

const StDialogGrip = styled.span`
  position: absolute;
  right: 2px;
  bottom: 1px;
`

/* taskbar */

const StTaskbar = styled.footer`
  display: flex;
  height: 40px;
  background: linear-gradient(90deg, #021a28, #03141f 50%, #040d1c);
  color: #fff;
`

const StTask = styled.button<{ $open?: boolean; $active?: boolean }>`
  display: flex;
  align-items: center;
  justify-content: center;
  width: 48px;
  height: 100%;
  padding: 0;
  border: 0;
  background-color: ${({ $active }) => ($active ? '#3a434c' : 'transparent')};
  background-image: ${({ $open }) => ($open ? 'linear-gradient(#86b8e4, #86b8e4)' : 'none')};
  background-position: center bottom;
  background-repeat: no-repeat;
  background-size: ${({ $active }) => ($active ? '100%' : '40px')} 2px;
`

const StTaskSearch = styled.label`
  display: flex;
  align-items: center;
  width: 320px;
  padding-left: 11px;
  background: #f2f2f2;
  input {
    flex: 1;
    min-width: 0;
    padding: 0 0 0 11px;
    border: 0;
    outline: 0;
    background: none;
    font-size: 14px;
  }
  input::placeholder {
    color: #444;
  }
`

const StTaskList = styled.div`
  display: flex;
  gap: 1px;
`

const StTray = styled.div`
  display: flex;
  margin-left: auto;
`

const StTrayButton = styled(StPlainButton)<{ $w: number }>`
  width: ${({ $w }) => $w}px;
`

const StClock = styled.div`
  display: flex;
  flex-direction: column;
  align-items: center;
  justify-content: center;
  width: 68px;
  font-size: 11px;
  line-height: 18px;
`

const StNotice = styled.span`
  position: relative;
`

const StNoticeCount = styled.span`
  position: absolute;
  left: 8px;
  top: 7px;
  width: 16px;
  height: 16px;
  border: 1px solid #8d959c;
  border-radius: 50%;
  background: #2b3540;
  color: #fff;
  font-size: 11px;
  line-height: 14px;
  text-align: center;
`

const StShowDesktop = styled.button`
  width: 6px;
  margin-left: 5px;
  padding: 0;
  border: 0;
  border-left: 1px solid #5a646e;
  background: none;
`
